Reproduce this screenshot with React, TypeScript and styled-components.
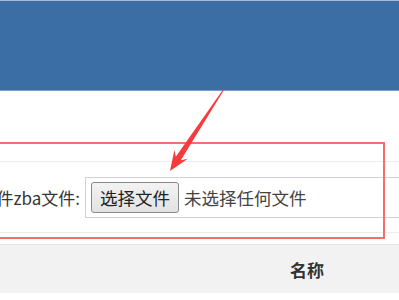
import React from "react";
import styled, { createGlobalStyle } from "styled-components";

const GlobalStyle = createGlobalStyle`
  html, body {
    margin: 0;
    padding: 0;
    background: #fff;
    overflow: hidden;
  }
  body {
    font-family: "Noto Sans CJK SC", "Noto Sans", sans-serif;
  }
`;

const App: React.FC = () => {
  return (
    <Page>
      <GlobalStyle />
      <Header />
      <Main>
        <FormRow>
          <Label>件zba文件:</Label>
          <FileBox>
            <FileButton type="button">选择文件</FileButton>
            <Hint>未选择任何文件</Hint>
          </FileBox>
        </FormRow>
        <TableHead>
          <HeadCell>名称</HeadCell>
        </TableHead>
      </Main>
      <RedFrame />
      <Arrow viewBox="0 0 399 300" width="399" height="300">
        <polygon
          points="224.4,89.3 180.8,160.2 187.8,158.8 170,171 174.4,150 175.8,156.8 223.6,88.7"
          fill="#f53b3b"
        />
      </Arrow>
    </Page>
  );
};

export default App;

const Page = styled.div`
  ${{
    position: "relative",
    width: "399px",
    height: "300px",
    overflow: "hidden",
    background: "#fff"
  }}
`;

const Header = styled.header`
  ${{
    height: "89px",
    background: "#3b6ea5",
    borderTop: "1px solid #a6b9d2",
    borderBottom: "1px solid #7a9dc7"
  }}
`;

const Main = styled.main`
  ${{
    paddingTop: "70px"
  }}
`;

const FormRow = styled.div`
  ${{
    height: "70px",
    display: "flex",
    alignItems: "center",
    borderTop: "1px solid #ececec",
    borderBottom: "1px solid #ececec"
  }}
`;

const Label = styled.div`
  ${{
    width: "80px",
    flexShrink: 0,
    display: "flex",
    justifyContent: "flex-end",
    whiteSpace: "nowrap",
    fontSize: "17px",
    color: "#333",
    marginRight: "5px"
  }}
`;

const FileBox = styled.div`
  ${{
    flex: 1,
    height: "39px",
    display: "flex",
    alignItems: "center",
    gap: "5px",
    paddingLeft: "5px",
    border: "1px solid #d2d2d2",
    borderRight: "none"
  }}
`;

const FileButton = styled.button`
  ${{
    height: "31px",
    padding: "0 8px",
    border: "1px solid #8a8a8a",
    borderRadius: "3px",
    background: "linear-gradient(#f3f3f3, #e2e2e2)",
    fontFamily: "inherit",
    fontSize: "17.5px",
    color: "#222",
    lineHeight: "29px"
  }}
`;

const Hint = styled.span`
  ${{
    fontSize: "17.5px",
    color: "#444",
    whiteSpace: "nowrap"
  }}
`;

const TableHead = styled.div`
  ${{
    marginTop: "11px",
    height: "48px",
    display: "flex",
    alignItems: "center",
    background: "#f2f2f2",
    borderTop: "1px solid #e6e6e6"
  }}
`;

const HeadCell = styled.div`
  ${{
    paddingLeft: "290px",
    fontSize: "17px",
    fontWeight: "bold",
    color: "#333"
  }}
`;

const RedFrame = styled.div`
  ${{
    position: "absolute",
    left: "-10px",
    top: "142px",
    width: "395px",
    height: "97px",
    boxSizing: "border-box",
    border: "2px solid #f76d6d",
    pointerEvents: "none"
  }}
`;

const Arrow = styled.svg`
  ${{
    position: "absolute",
    left: 0,
    top: 0,
    pointerEvents: "none"
  }}
`;
